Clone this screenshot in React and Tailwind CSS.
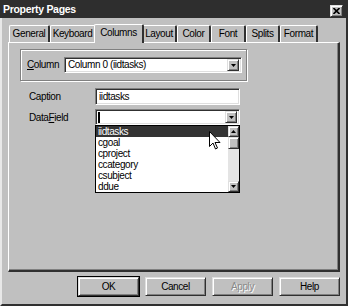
import React from 'react';

const raised = "border border-t-[#dfdfdf] border-l-[#dfdfdf] border-r-[#303030] border-b-[#303030] shadow-[inset_1px_1px_0_#fff,inset_-1px_-1px_0_#808080]";
const sunken = "border border-t-[#808080] border-l-[#808080] border-r-white border-b-white shadow-[inset_1px_1px_0_#303030,inset_-1px_-1px_0_#dfdfdf]";

const tabs = [
    { name: 'General', w: 'w-[41px]' },
    { name: 'Keyboard', w: 'w-[46px]' },
    { name: 'Columns', w: 'w-[50px]', active: true },
    { name: 'Layout', w: 'w-[35px]' },
    { name: 'Color', w: 'w-[34px]' },
    { name: 'Font', w: 'w-[35px]' },
    { name: 'Splits', w: 'w-[34px]' },
    { name: 'Format', w: 'w-[38px]' },
];

const fields = ['iidtasks', 'cgoal', 'cproject', 'ccategory', 'csubject', 'ddue'];

const Arrow = ({ up }) => (
    <svg width="5" height="3" viewBox="0 0 5 3">
        <path d={up ? "M2.5 0 L5 3 L0 3 Z" : "M0 0 L5 0 L2.5 3 Z"} fill="#000" />
    </svg>
);

const DropButton = () => (
    <div className={`${raised} w-[12px] h-[12px] bg-[#c0c0c0] flex items-center justify-center`}>
        <Arrow />
    </div>
);

const Tab = ({ name, w, active }) => (
    <div
        className={
            active
                ? `${w} -mx-[2px] h-[19px] -mb-px z-10 relative bg-[#c0c0c0] border-t border-l border-white border-r-2 border-r-[#303030] rounded-t-[2px] flex items-center justify-center pb-[3px]`
                : `${w} h-[17px] bg-[#c0c0c0] border-t border-l border-white border-r-2 border-r-[#303030] rounded-t-[2px] flex items-center justify-center`
        }
    >
        {name}
    </div>
);

const Button = ({ children, isDefault, disabled }) => (
    <div
        className={`w-[61px] h-[19px] ${isDefault ? 'outline outline-1 outline-black' : ''} ${raised} bg-[#c0c0c0] flex items-center justify-center`}
    >
        <span className={disabled ? 'text-[#8a8a8a] [text-shadow:1px_1px_0_#fff]' : ''}>{children}</span>
    </div>
);

export default function App() {
    return (
        <div className="relative w-[348px] h-[306px] bg-[#c0c0c0] flex flex-col text-[10px] tracking-[-0.4px] text-black font-['Liberation_Sans',Arial,sans-serif] leading-none overflow-hidden">
            {/* title bar */}
            <div className="h-[18px] bg-[#2e2e2e] flex items-center justify-between pl-[3px] pr-[5px]">
                <span className="text-white font-bold text-[10.5px] tracking-[-0.3px]">Property Pages</span>
                <div className={`${raised} w-[13px] h-[12px] bg-[#c0c0c0] flex items-center justify-center mt-[3px]`}>
                    <svg width="7" height="6" viewBox="0 0 7 6">
                        <path d="M0.5 0 L6.5 6 M6.5 0 L0.5 6" stroke="#000" strokeWidth="1.6" />
                    </svg>
                </div>
            </div>

            {/* body */}
            <div className="flex-1 flex flex-col border-l-2 border-l-[#e8e8e8] border-r-2 border-r-[#303030] border-b-2 border-b-[#303030] pl-[6px] pr-[6px] pt-[6px]">
                <div className="flex items-end pl-[1px]">
                    {tabs.map((t) => (
                        <Tab key={t.name} {...t} />
                    ))}
                </div>

                <div className="w-[332px] h-[230px] border-t border-l border-white border-r-2 border-b-2 border-r-[#303030] border-b-[#303030] shadow-[inset_-1px_-1px_0_#808080] pl-[11px] pt-[6px]">
                    {/* Column group */}
                    <div className="w-[227px] h-[32px] border border-[#808080] shadow-[1px_1px_0_#fff,inset_1px_1px_0_#fff] flex items-center pl-[6px]">
                        <span className="w-[37px]"><span className="underline">C</span>olumn</span>
                        <div className={`${sunken} w-[178px] h-[16px] bg-white flex items-center justify-between pl-[3px] pr-[2px]`}>
                            <span>Column 0 (iidtasks)</span>
                            <DropButton />
                        </div>
                    </div>

                    <div className="ml-[9px] mt-[7px] flex flex-col">
                        <div className="flex items-center h-[17px]">
                            <span className="w-[66px]">Caption</span>
                            <div className={`${sunken} w-[145px] h-[17px] bg-white flex items-center pl-[3px]`}>iidtasks</div>
                        </div>
                        <div className="flex items-start mt-[4px]">
                            <span className="w-[66px] mt-[4px]">Data<span className="underline">F</span>ield</span>
                            <div className="flex flex-col">
                                <div className={`${sunken} w-[145px] h-[16px] bg-white flex items-center justify-between pl-[2px] pr-[2px]`}>
                                    <div className="w-[2px] h-[11px] bg-black" />
                                    <DropButton />
                                </div>
                                <div className="w-[145px] h-[68px] border border-black bg-white flex">
                                    <div className="flex-1 flex flex-col">
                                        {fields.map((f, i) => (
                                            <div
                                                key={f}
                                                className={`h-[11px] flex items-center pl-[2px] ${i === 0 ? 'bg-[#333333] text-white' : ''}`}
                                            >
                                                {f}
                                            </div>
                                        ))}
                                    </div>
                                    <div className="w-[11px] flex flex-col bg-[#e4e4e4]">
                                        <div className={`${raised} h-[11px] bg-[#c0c0c0] flex items-center justify-center`}>
                                            <Arrow up />
                                        </div>
                                        <div className={`${raised} h-[12px] bg-[#c0c0c0]`} />
                                        <div className="flex-1" />
                                        <div className={`${raised} h-[11px] bg-[#c0c0c0] flex items-center justify-center`}>
                                            <Arrow />
                                        </div>
                                    </div>
                                </div>
                            </div>
                        </div>
                    </div>
                </div>

                {/* buttons */}
                <div className="flex justify-end gap-[6px] mt-[5px] w-[332px]">
                    <Button isDefault>OK</Button>
                    <Button>Cancel</Button>
                    <Button disabled>Apply</Button>
                    <Button>Help</Button>
                </div>
            </div>

            {/* mouse pointer */}
            <svg className="absolute left-[209px] top-[131px]" width="12" height="19" viewBox="0 0 12 19">
                <path d="M0.5 0.5 L0.5 15.5 L4 12 L6.5 18 L8.5 17 L6 11.5 L11 11.5 Z" fill="#fff" stroke="#000" strokeWidth="1" />
            </svg>
        </div>
    );
}
